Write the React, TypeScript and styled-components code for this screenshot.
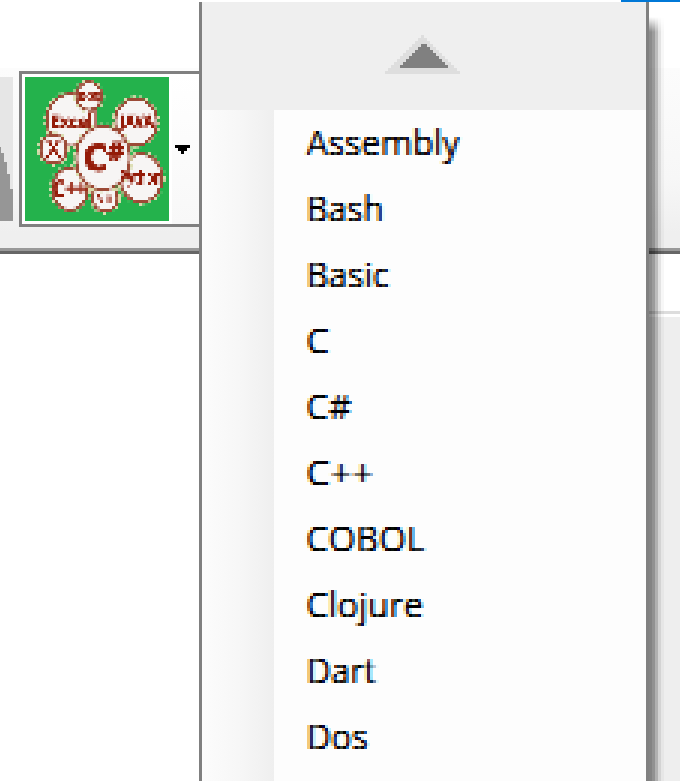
import React from 'react';
import styled, { createGlobalStyle } from 'styled-components';

const GlobalStyle = createGlobalStyle`
  * { box-sizing: border-box; }
  body { margin: 0; background: #fff; }
`;

const Window = styled.main`
  position: relative;
  display: flex;
  flex-direction: column;
  width: 680px;
  height: 781px;
  overflow: hidden;
  background: #fff;
  font-family: 'Open Sans', 'Noto Sans', sans-serif;
`;

const Accent = styled.div`
  align-self: flex-end;
  width: 59px;
  height: 2px;
  margin-bottom: 66px;
  background: #0078d7;
`;

const Toolbar = styled.header`
  display: flex;
  align-items: flex-start;
  gap: 6px;
  height: 186px;
  padding-top: 3px;
  background: linear-gradient(#fcfcfc, #f7f7f7 60%, #efefef 90%, #efefef);
  border-bottom: 3px solid #666;
  box-shadow: inset 0 -3px #999;
`;

const PreviousIcon = styled.svg`
  display: block;
  width: 13px;
  height: 144px;
  margin-top: 6px;
`;

const SplitButton = styled.button`
  display: flex;
  align-items: center;
  gap: 6px;
  width: 200px;
  height: 156px;
  padding: 3px;
  background: linear-gradient(#fff, #f8f8f8);
  border: 3px solid #808080;
`;

const LanguagesIcon = styled.svg`
  display: block;
  flex: none;
  width: 144px;
  height: 144px;
  outline: 3px solid #fff;
`;

const DropArrow = styled.svg`
  display: block;
  width: 15px;
  height: 9px;
`;

const Workspace = styled.section`
  display: flex;
  flex: 1;
  justify-content: flex-end;
`;

const SidePane = styled.aside`
  width: 34px;
  margin-top: 57px;
  background: #eee;
  border-top: 3px solid #ddd;
  box-shadow: inset 0 3px #fff;
`;

const Menu = styled.nav`
  position: absolute;
  top: 2px;
  left: 199px;
  display: flex;
  flex-direction: column;
  width: 450px;
  height: 779px;
  background: #fdfdfd;
  border: solid #808080;
  border-width: 0 3px;
`;

const MenuShadow = styled.div`
  position: absolute;
  top: 17px;
  left: 649px;
  width: 15px;
  height: 764px;
  background: linear-gradient(90deg,
    rgba(0,0,0,.45) 0 3px, rgba(0,0,0,.39) 3px 6px, rgba(0,0,0,.26) 6px 9px,
    rgba(0,0,0,.11) 9px 12px, rgba(0,0,0,.03) 12px 15px);
  mask-image: linear-gradient(transparent, #000 15px);
`;

const ScrollUp = styled.button`
  display: flex;
  flex: none;
  align-items: center;
  justify-content: center;
  height: 108px;
  padding: 0 0 4px;
  background: #efefef;
  border: 0;
`;

const ScrollArrow = styled.svg`
  width: 78px;
  height: 39px;
`;

const MenuBody = styled.div`
  display: grid;
  grid-template-columns: 72px 1fr;
  flex: 1;
`;

const Gutter = styled.div`
  background: linear-gradient(90deg, #fcfcfc, #f7f7f7 50%, #efefef);
`;

const Items = styled.ul`
  margin: 0;
  padding: 0;
  height: 671px;
  overflow: hidden;
  list-style: none;
  filter: url(#cleartype);
  mix-blend-mode: multiply;
`;

const Item = styled.li<{ $stretch: number }>`
  height: 66px;
  padding-left: 32px;
  color: #000;
  font-size: 37px;
  line-height: 63px;
  white-space: nowrap;
  transform: scaleX(${(p) => p.$stretch});
  transform-origin: 34px 0;
`;

const languages: [string, number][] = [
  ['Assembly', 0.935],
  ['Bash', 0.915],
  ['Basic', 0.93],
  ['C', 1],
  ['C#', 0.96],
  ['C++', 1.03],
  ['COBOL', 0.955],
  ['Clojure', 0.955],
  ['Dart', 0.925],
  ['Dos', 0.93],
];

const bubbles = [
  { x: 46, y: 43, rx: 24, ry: 26, label: 'Excel', size: 18, tx: 47, ty: 51, w: 42, weight: 700, line: 0.5 },
  { x: 64, y: 19, rx: 12.5, ry: 14, label: 'DOS', size: 12, tx: 64, ty: 23.5, w: 21, weight: 700, line: 0.3 },
  { x: 111, y: 45, rx: 21, ry: 23, label: 'JAVA', size: 16, tx: 112, ty: 50, w: 33, weight: 700, line: 0.6 },
  { x: 28.5, y: 72, rx: 13, ry: 14, label: 'X', size: 23, tx: 28.5, ty: 80, w: 14, weight: 400, line: 0.8 },
  { x: 45, y: 112, rx: 17.5, ry: 21, label: 'C++', size: 23, tx: 45, ty: 120, w: 35, weight: 700, line: 0.6 },
  { x: 80, y: 121, rx: 12.5, ry: 13, label: 'VB', size: 14, tx: 80, ty: 126, w: 16, weight: 400, line: 0.2 },
  { x: 116, y: 101, rx: 21, ry: 24, label: 'Python', size: 20, tx: 115.5, ty: 107, w: 42, weight: 700, line: 0 },
  { x: 78, y: 81, rx: 27, ry: 31.5, label: 'C#', size: 0, tx: 0, ty: 0, w: 0, weight: 700, line: 0 },
];

/** Samples one pixel in every 3px cell and spreads it over the cell, as a magnified bitmap does. */
const Filters = () => (
  <svg width="0" height="0" style={{ position: 'absolute' }} aria-hidden="true">
    <filter id="pixels" filterUnits="userSpaceOnUse" primitiveUnits="userSpaceOnUse" x="0" y="0" width="144" height="144" colorInterpolationFilters="sRGB">
      <feGaussianBlur in="SourceGraphic" stdDeviation="0.6" result="soft" />
      <feFlood x="1" y="1" width="1" height="1" floodColor="#000" />
      <feOffset dx="0" dy="0" x="0" y="0" width="3" height="3" />
      <feTile x="0" y="0" width="144" height="144" result="grid" />
      <feComposite in="soft" in2="grid" operator="in" />
      <feMorphology operator="dilate" radius="1" />
    </filter>
    <filter id="cleartype" filterUnits="userSpaceOnUse" primitiveUnits="userSpaceOnUse" x="0" y="0" width="372" height="671" colorInterpolationFilters="sRGB">
      <feFlood x="1" y="1" width="1" height="1" floodColor="#000" />
      <feOffset dx="0" dy="0" x="0" y="0" width="3" height="3" />
      <feTile x="0" y="0" width="372" height="671" result="grid" />
      <feGaussianBlur in="SourceAlpha" stdDeviation="1 0.3" />
      <feComponentTransfer result="soft">
        <feFuncA type="linear" slope="1.15" />
      </feComponentTransfer>
      <feOffset in="soft" dx="1" dy="0" />
      <feComposite in2="grid" operator="in" />
      <feMorphology operator="dilate" radius="1" />
      <feColorMatrix values="0 0 0 0 0  0 0 0 0 1  0 0 0 0 1  0 0 0 1 0" result="red" />
      <feComposite in="soft" in2="grid" operator="in" />
      <feMorphology operator="dilate" radius="1" />
      <feColorMatrix values="0 0 0 0 1  0 0 0 0 0  0 0 0 0 1  0 0 0 1 0" result="green" />
      <feOffset in="soft" dx="-1" dy="0" />
      <feComposite in2="grid" operator="in" />
      <feMorphology operator="dilate" radius="1" />
      <feColorMatrix values="0 0 0 0 1  0 0 0 0 1  0 0 0 0 0  0 0 0 1 0" result="blue" />
      <feBlend in="red" in2="green" mode="multiply" result="rg" />
      <feBlend in="rg" in2="blue" mode="multiply" />
    </filter>
  </svg>
);

export default function App() {
  return (
    <Window>
      <GlobalStyle />
      <Filters />
      <Accent />
      <Toolbar>
        <PreviousIcon viewBox="0 0 13 144" shapeRendering="crispEdges">
          <rect width="13" height="144" fill="#e6e6e6" />
          <path d="M0 70h1v6h3v9h3v12h3v15h3v32H0z" fill="#969696" />
        </PreviousIcon>
        <SplitButton aria-label="Language">
          <LanguagesIcon viewBox="0 0 144 144">
            <g filter="url(#pixels)">
              <rect width="144" height="144" fill="#24b24c" />
              {bubbles.map((b) => (
                <g key={b.label}>
                  <ellipse cx={b.x} cy={b.y} rx={b.rx + 1.5} ry={b.ry + 1.5} fill="none" stroke="#d9dcae" strokeWidth="3" strokeDasharray="4 3" />
                  <ellipse cx={b.x} cy={b.y} rx={b.rx} ry={b.ry} fill="#f7f5f4" stroke="#9c4a36" strokeWidth="2.6" />
                </g>
              ))}
              <path d="M65 34v16M70 34v16" stroke="#b57768" strokeWidth="2" />
              {bubbles.filter((b) => b.size > 0).map((b) => (
                <text key={b.label} x={b.tx} y={b.ty} textAnchor="middle" textLength={b.w} lengthAdjust="spacingAndGlyphs"
                  fontFamily="Open Sans, sans-serif" fontWeight={b.weight} fontSize={b.size}
                  fill="#941b08" stroke="#941b08" strokeWidth={b.line}>{b.label}</text>
              ))}
              <g fontFamily="Open Sans, sans-serif" fontWeight="700" fill="#941b08" stroke="#941b08">
                <text x="58" y="94" fontSize="37" textLength="25" lengthAdjust="spacingAndGlyphs" strokeWidth="1.2">C</text>
                <text x="82" y="84" fontSize="26" textLength="18" lengthAdjust="spacingAndGlyphs" strokeWidth="0.8">#</text>
              </g>
            </g>
          </LanguagesIcon>
          <DropArrow viewBox="0 0 15 9" shapeRendering="crispEdges">
            <path d="M0 0h15v3h-3v3H9v3H6V6H3V3H0z" />
          </DropArrow>
        </SplitButton>
      </Toolbar>
      <Workspace>
        <SidePane />
      </Workspace>
      <MenuShadow />
      <Menu>
        <ScrollUp aria-label="Scroll up">
          <ScrollArrow viewBox="0 0 78 39" shapeRendering="crispEdges">
            <path d="M0 39v-3h3v-3h3v-3h3v-3h3v-3h3v-3h3v-3h3v-3h3v-3h3v-3h3V6h3V3h3V0h3v3h3v3h3v3h3v3h3v3h3v3h3v3h3v3h3v3h3v3h3v3h3v3h3v3z" fill="#dedede" />
            <path d="M15 33v-3h3v-3h3v-3h3v-3h3v-3h3v-3h3v-3h3V9h6v3h3v3h3v3h3v3h3v3h3v3h3v3h3v3z" fill="#808080" />
          </ScrollArrow>
        </ScrollUp>
        <MenuBody>
          <Gutter />
          <Items>
            {languages.map(([name, stretch]) => (
              <Item key={name} $stretch={stretch}>{name}</Item>
            ))}
          </Items>
        </MenuBody>
      </Menu>
    </Window>
  );
}
